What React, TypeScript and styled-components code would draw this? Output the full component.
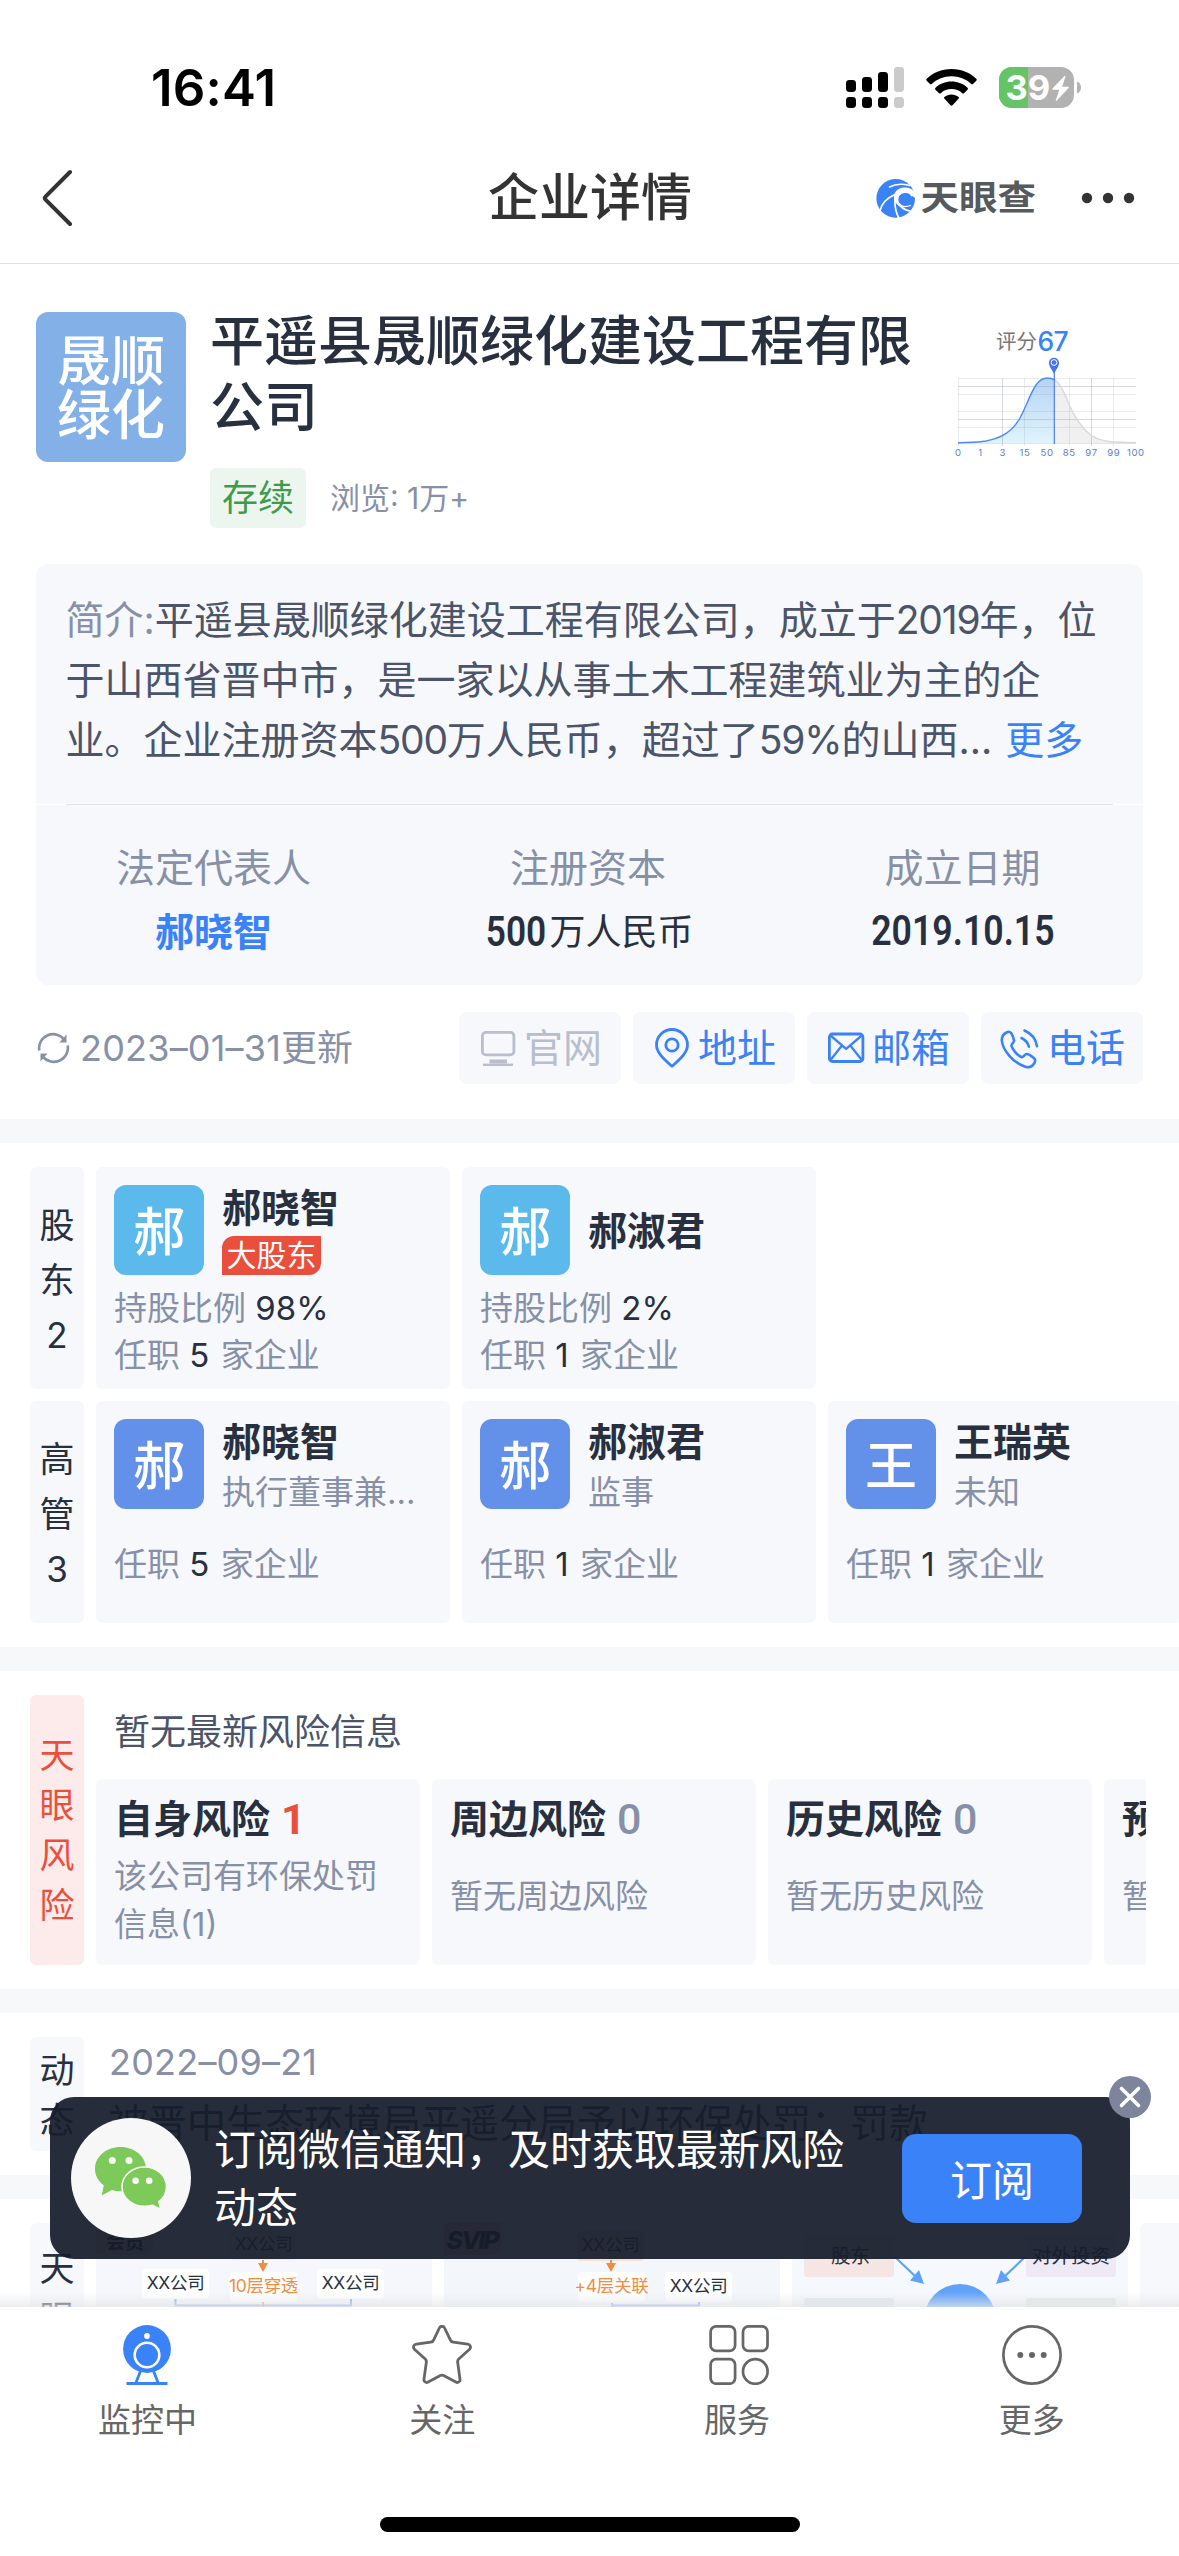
import React from 'react';
import styled, { createGlobalStyle, css } from 'styled-components';

const color = {
  ink: '#28303f',
  text: '#4b5468',
  muted: '#8790a6',
  blue: '#3a82f7',
  red: '#ea4f3d',
  panel: '#f6f8fc',
  band: '#f6f8fa',
  tab: '#666666',
};

const Global = createGlobalStyle`
  * { box-sizing: border-box; }
  html, body { margin: 0; padding: 0; background: #fff; }
  body {
    font-family: Inter, "Noto Sans CJK SC", sans-serif;
    color: ${color.ink};
    -webkit-font-smoothing: antialiased;
  }
  svg { display: block; flex: none; }
`;

const Screen = styled.div`
  position: relative;
  width: 1179px;
  height: 2556px;
  overflow: hidden;
  display: flex;
  flex-direction: column;
  background: #fff;
`;

const StatusBar = styled.div`
  height: 134px;
  flex: none;
  display: flex;
  align-items: flex-start;
  justify-content: space-between;
  padding: 67px 98px 0 151px;
`;
const Clock = styled.div`
  font-size: 51px;
  font-weight: 600;
  line-height: 42px;
  letter-spacing: 0.2px;
  color: #000;
`;
const StatusIcons = styled.div`
  display: flex;
  align-items: center;
  gap: 22px;
`;

const NavBar = styled.header`
  height: 130px;
  flex: none;
  display: grid;
  grid-template-columns: 1fr auto 1fr;
  align-items: center;
  border-bottom: 1px solid #e0e0e2;
  padding: 0 44px 1px 42px;
`;
const NavTitle = styled.h1`
  margin: 0;
  padding-left: 3px;
  font-size: 51px;
  line-height: 60px;
  font-weight: 500;
  color: #333;
`;
const NavRight = styled.div`
  display: flex;
  align-items: center;
  justify-content: flex-end;
`;
const Brand = styled.div`
  display: flex;
  align-items: center;
  gap: 4px;
  margin-right: 45px;
`;
const BrandText = styled.span`
  font-size: 38.5px;
  line-height: 40px;
  font-weight: 700;
  color: #56595d;
  transform: scaleY(0.88);
`;

const Body = styled.main`
  flex: 1;
  min-height: 0;
  overflow: hidden;
  position: relative;
`;
const Band = styled.div`
  height: 24px;
  background: ${color.band};
`;

const Summary = styled.section`
  padding: 48px 36px 35px;
`;
const CompanyHead = styled.div`
  display: flex;
  align-items: flex-start;
  height: 252px;
`;
const CompanyLogo = styled.div`
  width: 150px;
  height: 150px;
  border-radius: 12px;
  background: #84b0e8;
  color: #fff;
  font-size: 54px;
  line-height: 54px;
  font-weight: 500;
  display: flex;
  flex-direction: column;
  align-items: center;
  justify-content: center;
  padding-top: 4px;
`;
const CompanyInfo = styled.div`
  width: 716px;
  margin-left: 24px;
  margin-top: -3px;
`;
const CompanyName = styled.h2`
  margin: 0;
  font-size: 54px;
  line-height: 66px;
  font-weight: 500;
`;
const Meta = styled.div`
  display: flex;
  align-items: center;
  gap: 24px;
  margin-top: 27px;
`;
const StatusTag = styled.span`
  width: 96px;
  height: 60px;
  border-radius: 6px;
  background: #ecf6ef;
  color: #3f9b4c;
  font-size: 36px;
  line-height: 60px;
  text-align: center;
`;
const Views = styled.span`
  font-size: 30px;
  line-height: 60px;
  color: ${color.muted};
`;
const ScoreChart = styled.svg`
  margin-left: 24px;
  overflow: visible;
`;

const IntroCard = styled.div`
  display: flex;
  flex-direction: column;
`;
const Intro = styled.p`
  margin: 0;
  height: 240px;
  padding: 26px 30px 0 29.5px;
  border-radius: 12px 12px 0 0;
  background: ${color.panel};
  font-size: 39px;
  line-height: 60px;
  color: ${color.text};
`;
const IntroLine = styled.span`
  display: block;
  white-space: nowrap;
`;
const Digits = styled.span<{ $track?: number }>`
  letter-spacing: ${(p) => p.$track ?? -1.2}px;
`;
const Muted = styled.span`
  color: ${color.muted};
`;
const More = styled.span`
  color: ${color.blue};
  margin-left: 13px;
`;
const Rule = styled.div`
  height: 1px;
  margin: 0 30px;
  background: #e0e4ef;
`;
const Facts = styled.div`
  height: 180px;
  display: flex;
  justify-content: center;
  border-radius: 0 0 12px 12px;
  background: ${color.panel};
  padding: 33px 3px 0 0;
`;
const Fact = styled.div`
  width: 374.5px;
  flex: none;
  text-align: center;
`;
const FactLabel = styled.div`
  font-size: 39px;
  line-height: 60px;
  color: ${color.muted};
`;
const FactValue = styled.div<{ $link?: boolean }>`
  display: flex;
  justify-content: center;
  align-items: center;
  height: 60px;
  margin-top: 4px;
  font-size: ${(p) => (p.$link ? 39 : 36)}px;
  line-height: 60px;
  font-weight: ${(p) => (p.$link ? 600 : 400)};
  color: ${(p) => (p.$link ? color.blue : color.ink)};
`;
const Figure = styled.b<{ $w: number; $squeeze: number; $lift?: number }>`
  width: ${(p) => p.$w}px;
  padding-bottom: ${(p) => p.$lift ?? 0}px;
  display: flex;
  justify-content: center;
  font-family: Roboto, "Noto Sans CJK SC", sans-serif;
  font-weight: 600;
  font-size: 42px;
  > span {
    flex: none;
    transform: scaleX(${(p) => p.$squeeze});
  }
`;

const Actions = styled.div`
  display: flex;
  align-items: center;
  gap: 12px;
  margin-top: 27px;
`;
const Updated = styled.div`
  flex: 1;
  display: flex;
  align-items: center;
  gap: 10px;
  padding-left: 1px;
  font-size: 36px;
  line-height: 72px;
  color: ${color.muted};
  white-space: nowrap;
`;
const ActionButton = styled.button<{ $off?: boolean }>`
  width: 162px;
  height: 72px;
  border: 0;
  border-radius: 8px;
  background: ${color.panel};
  color: ${(p) => (p.$off ? '#b8becb' : color.blue)};
  display: flex;
  align-items: center;
  padding: 0 0 0 17px;
  gap: 6px;
  font: inherit;
  font-size: 39px;
  line-height: 72px;
  white-space: nowrap;
`;

const People = styled.section`
  padding: 24px 0 24px 30px;
  display: flex;
  flex-direction: column;
  gap: 12px;
`;
const Row = styled.div`
  display: flex;
  gap: 12px;
`;
const SideLabel = styled.div<{ $h: number; $pitch: number; $alert?: boolean; $top?: number }>`
  width: 54px;
  height: ${(p) => p.$h}px;
  flex: none;
  border-radius: 6px;
  background: ${(p) => (p.$alert ? '#fcebea' : color.panel)};
  color: ${(p) => (p.$alert ? color.red : color.ink)};
  display: flex;
  flex-direction: column;
  align-items: center;
  justify-content: ${(p) => (p.$top === undefined ? 'center' : 'flex-start')};
  padding-top: ${(p) => p.$top ?? (p.$alert ? 0 : 4)}px;
  font-size: 35px;
  line-height: ${(p) => p.$pitch}px;
`;
const PersonCard = styled.article`
  width: 354px;
  height: 222px;
  flex: none;
  border-radius: 6px;
  background: ${color.panel};
  padding: 18px;
`;
const PersonHead = styled.div`
  display: flex;
  gap: 18px;
  height: 90px;
`;
const Avatar = styled.div<{ $bg: string }>`
  width: 90px;
  height: 90px;
  flex: none;
  border-radius: 12px;
  background: ${(p) => p.$bg};
  color: #fff;
  font-size: 52px;
  line-height: 95px;
  font-weight: 500;
  text-align: center;
`;
const PersonMain = styled.div<{ $center?: boolean }>`
  min-width: 0;
  flex: 1;
  display: flex;
  flex-direction: column;
  align-items: flex-start;
  justify-content: ${(p) => (p.$center ? 'center' : 'space-between')};
  padding-top: ${(p) => (p.$center ? 2 : 0)}px;
`;
const PersonName = styled.div`
  font-size: 39px;
  line-height: 46px;
  font-weight: 600;
`;
const MajorTag = styled.span`
  width: 99px;
  height: 39px;
  border-radius: 12px 0 12px 0;
  background: ${color.red};
  color: #fff;
  font-size: 30px;
  line-height: 39px;
  text-align: center;
`;
const Post = styled.span`
  max-width: 198px;
  overflow: hidden;
  text-overflow: ellipsis;
  white-space: nowrap;
  font-size: 33px;
  line-height: 50px;
  height: 50px;
  margin-bottom: -8px;
  color: ${color.muted};
`;
const PersonLines = styled.div<{ $top: number }>`
  margin-top: ${(p) => p.$top}px;
  font-size: 33px;
  line-height: 47px;
  color: ${color.muted};
  b {
    font-weight: 400;
    color: ${color.ink};
  }
`;
const FirmCount = styled.b`
  margin-right: 2px;
`;

const RiskSection = styled.section`
  padding: 24px 33px 24px 30px;
  display: flex;
  gap: 12px;
`;
const RiskMain = styled.div`
  flex: 1;
  min-width: 0;
  overflow: hidden;
`;
const RiskNote = styled.div`
  height: 84px;
  padding-left: 18px;
  font-size: 36px;
  line-height: 75px;
  color: ${color.text};
`;
const RiskCard = styled.article`
  width: 324px;
  height: 186px;
  flex: none;
  border-radius: 6px;
  background: ${color.panel};
  padding: 15px 18px 0;
`;
const RiskTitle = styled.div<{ $hot?: boolean }>`
  height: 50px;
  display: flex;
  gap: 11px;
  font-size: 39px;
  line-height: 50px;
  font-weight: 600;
  white-space: nowrap;
  span {
    font-family: Roboto, sans-serif;
    font-weight: ${(p) => (p.$hot ? 700 : 500)};
    font-size: 43px;
    color: ${(p) => (p.$hot ? color.red : color.muted)};
  }
`;
const RiskText = styled.p<{ $two?: boolean }>`
  margin: ${(p) => (p.$two ? 8 : 28)}px 0 0;
  font-size: 33px;
  line-height: 48px;
  color: ${color.muted};
  ${(p) => !p.$two && css`white-space: nowrap;`}
`;

const NewsSection = styled.section`
  padding: 24px 0 24px 30px;
  display: flex;
  gap: 25px;
`;
const NewsMain = styled.div`
  height: 114px;
`;
const NewsDate = styled.div`
  font-size: 36px;
  line-height: 51px;
  color: ${color.muted};
`;
const NewsText = styled.div`
  font-size: 39px;
  line-height: 60px;
  margin-top: 5px;
`;

const GraphSection = styled.section`
  padding: 24px 0 0 30px;
  display: flex;
  gap: 12px;
`;
const GraphCard = styled.div<{ $bg: string }>`
  width: 336px;
  height: 222px;
  flex: none;
  border-radius: 6px;
  background: ${(p) => p.$bg};
  overflow: hidden;
`;
const Fade = styled.div`
  position: absolute;
  left: 0;
  right: 0;
  bottom: 0;
  height: 15px;
  background: linear-gradient(rgba(228, 230, 233, 0), rgba(228, 230, 233, 0.72));
`;

const Notice = styled.aside`
  position: absolute;
  left: 50px;
  top: 2097px;
  width: 1080px;
  height: 162px;
  border-radius: 24px;
  background: rgba(23, 29, 44, 0.935);
  display: flex;
  align-items: center;
  padding: 0 48px 0 21px;
`;
const WechatBadge = styled.div`
  width: 120px;
  height: 120px;
  flex: none;
  border-radius: 50%;
  background: #f7f7f7;
  display: flex;
  align-items: center;
  justify-content: center;
`;
const NoticeText = styled.div`
  flex: 1;
  padding: 2px 0 0 23px;
  font-size: 42px;
  line-height: 58px;
  color: #fff;
  white-space: nowrap;
`;
const Subscribe = styled.button`
  width: 180px;
  height: 89px;
  border: 0;
  border-radius: 14px;
  background: ${color.blue};
  color: #fff;
  font: inherit;
  font-size: 42px;
  line-height: 89px;
  padding: 2px 0 0;
`;
const Close = styled.button`
  position: absolute;
  right: -21px;
  top: -21px;
  width: 42px;
  height: 42px;
  border: 0;
  border-radius: 50%;
  background: #7d849c;
  display: flex;
  align-items: center;
  justify-content: center;
  padding: 0;
`;

const TabBar = styled.nav`
  height: 249px;
  flex: none;
  background: #fff;
  display: flex;
  flex-direction: column;
  align-items: center;
`;
const Tabs = styled.div`
  width: 100%;
  height: 210px;
  display: grid;
  grid-template-columns: repeat(4, 1fr);
  padding-top: 18px;
`;
const Tab = styled.div`
  display: flex;
  flex-direction: column;
  align-items: center;
  gap: 12px;
  font-size: 33px;
  line-height: 47px;
  color: ${color.tab};
`;
const HomeBar = styled.div`
  width: 420px;
  height: 15px;
  border-radius: 8px;
  background: #000;
`;

const Signal = () => (
  <svg width="58" height="41" viewBox="0 0 58 41">
    {[13, 10, 5, 0].map((top, i) => (
      <g key={i} fill={i === 3 ? '#cbcbcb' : '#000'}>
        <rect x={i * 16} y={top} width="10" height={25 - top} rx="3.4" />
        <rect x={i * 16} y="30" width="10" height="11" rx="3.4" />
      </g>
    ))}
  </svg>
);

const Wifi = () => (
  <svg width="51" height="37" viewBox="0 0 51 37">
    <path d="M25.5 0C35.4 0 44.400 3.800 50.300 9.800c.6.6.6 1.300 0 1.900l-3.300 3.300c-.5.5-1.200.5-1.700 0A28.500 28.500 0 0 0 25.500 7.200 28.500 28.500 0 0 0 5.700 15c-.5.5-1.200.5-1.700 0L.7 11.700c-.6-.6-.6-1.300 0-1.900C6.600 3.800 15.600 0 25.500 0z" />
    <path d="M25.500 12.600c6.200 0 11.800 2.300 16 6.200.6.5.6 1.300 0 1.900L38 24.200c-.5.5-1.200.5-1.700 0a16.300 16.300 0 0 0-21.600 0c-.5.5-1.200.5-1.700 0l-3.500-3.500c-.6-.6-.6-1.400 0-1.900 4.200-3.900 9.800-6.200 16-6.200z" />
    <path d="M25.500 25.400c2.700 0 5.100 1 7.100 2.500.5.400.5 1.100.1 1.600l-6.200 6.700c-.6.600-1.400.6-2 0l-6.200-6.700c-.4-.5-.4-1.200.1-1.600 2-1.500 4.400-2.500 7.100-2.500z" />
  </svg>
);

const Battery = () => (
  <svg width="82" height="41" viewBox="0 0 82 41">
    <defs>
      <clipPath id="cell">
        <rect width="75" height="41" rx="13" />
      </clipPath>
    </defs>
    <g clipPath="url(#cell)">
      <rect width="75" height="41" fill="#b2b2b2" />
      <rect width="29" height="41" fill="#65c466" />
    </g>
    <path d="M78 14.500c2.600 1 4 3.300 4 6s-1.400 5-4 6z" fill="#b2b2b2" />
    <text x="6.500" y="32.800" fontSize="34.500" fontWeight="700" fill="#fff">39</text>
    <path d="M65.500 9 53.500 21.600c-.4.500-.1 1.100.5 1.100h6.300l-3.600 10.700c-.1.600.5.800.9.400L69.600 21c.4-.500.1-1.200-.5-1.200h-6l3.400-10.200c.1-.6-.6-1-1-.6z" fill="#fff" />
  </svg>
);

const BackIcon = () => (
  <svg width="31" height="58" viewBox="0 0 31 58" fill="none" stroke="#333" strokeWidth="4" strokeLinecap="round" strokeLinejoin="round">
    <path d="M28 3 3.500 27.600a2.200 2.200 0 0 0 0 3L28 55" />
  </svg>
);

const EyeLogo = () => (
  <svg width="40" height="39" viewBox="0 0 40 39">
    <circle cx="19.700" cy="19.400" r="19.300" fill={color.blue} />
    <g fill="none" stroke="#fff" strokeLinecap="round">
      <path d="M33.500 6.500C25 4 18 5.500 13.500 8" strokeWidth="1.500" />
      <path d="M19 15.500C12 18.500 6 24 4 31.500" strokeWidth="1.700" />
      <path d="M19.300 17c-1 8 .5 16.500 3.500 22" strokeWidth="1.700" />
      <path d="M21 22.500c3 5.500 7.500 8.500 13 9.500" strokeWidth="1.700" />
      <path d="M20 23c3.500 4.500 9 5.500 14.500 3.500" strokeWidth="1.300" />
    </g>
    <path d="M39 13.500C36.500 9.500 31 7.700 26 8.800c-6.500 1.400-9.500 7.300-7.300 12.700 1.300 3.300 4.800 5.300 8.300 5-3.300-1.200-5-4-4.500-7 .5-3.500 3.800-5.700 7.500-5.400 2.700.2 4.500 1.500 5.300 3.300 1.300-.2 2.600.3 3.700 1.600z" fill="#fff" />
  </svg>
);

const Dots = () => (
  <svg width="54" height="12" viewBox="0 0 54 12" fill="#333">
    <circle cx="6" cy="6" r="5.200" />
    <circle cx="27" cy="6" r="5.200" />
    <circle cx="48" cy="6" r="5.200" />
  </svg>
);

const curveLeft =
  'M8 130.700C19 130.700 28 130.300 36 129 44 127.500 48 126 52.300 123.700 60 119.500 66 113 70 106 76 95 80 82 86 73 90 67.500 93 66 97 66 100 66 102.500 66.500 104.300 67.700';
const curveRight = 'M104.300 67.700C111 72 115 82 119.300 93 125 106 133 117 141.300 123.700 152 130 163 130.700 186 130.700';

const Score = () => (
  <ScoreChart width="190" height="150" viewBox="0 0 190 150">
    <defs>
      <linearGradient id="bell" x1="0" y1="0" x2="0" y2="1">
        <stop offset="0" stopColor="#b5d3f5" />
        <stop offset="1" stopColor="#dff4fb" />
      </linearGradient>
    </defs>
    <text x="46" y="37" fontSize="20.500" fill="#777">评分</text>
    <text x="87.500" y="39" fontSize="26.500" fontWeight="500" letterSpacing="-0.8" fill={color.blue}>67</text>
    <path d={`${curveRight}V131.500H104.300z`} fill="#f0f0f0" />
    <path d={`${curveLeft}V131.500H8z`} fill="url(#bell)" />
    <g stroke="#8d93a0" strokeWidth="1">
      {[66.500, 74.500, 82.500, 99.500, 107.500, 115.500, 131.500].map((y) => (
        <path key={y} d={`M8 ${y}H186`} strokeOpacity={y === 74.500 || y === 107.500 ? 0.34 : 0.18} />
      ))}
      {[8.500, 52.500, 74.500, 119.500, 141.500, 163.500].map((x) => (
        <path key={x} d={`M${x} 66V134`} strokeOpacity={x === 52.500 || x === 141.500 ? 0.34 : 0.18} />
      ))}
    </g>
    <path d={curveRight} fill="none" stroke="#d9d9d9" strokeWidth="1.400" />
    <path d={curveLeft} fill="none" stroke="#4b8bf5" strokeWidth="1.400" />
    <path d="M104.300 58V132" stroke="#4b7cf3" strokeWidth="1.200" />
    <path d="M104 62c-1.500-4-5-7-5-11.300a5 5 0 0 1 10 0c0 4.300-3.500 7.300-5 11.300z" fill="#4472f0" />
    <circle cx="104" cy="50.500" r="2.900" fill="#4472f0" stroke="#fff" strokeWidth="1" />
    <g fontSize="9.500" letterSpacing="0.600" fill="#5580cf" textAnchor="middle">
      {['0', '1', '3', '15', '50', '85', '97', '99', '100'].map((t, i) => (
        <text key={t} x={8.300 + i * 22.200} y="143.800">{t}</text>
      ))}
    </g>
  </ScoreChart>
);

const RefreshIcon = () => (
  <svg width="33" height="32" viewBox="0 0 33 32" fill="none" stroke={color.muted} strokeWidth="2.600">
    <path d="M2.300 18.500A14 14 0 0 1 27.500 8" />
    <path d="M30.700 13.500A14 14 0 0 1 5.500 24" />
    <path d="M29.500 2.500v8h-7z" fill={color.muted} stroke="none" />
    <path d="M3.500 29.500v-8h7z" fill={color.muted} stroke="none" />
  </svg>
);
const MonitorIcon = () => (
  <svg width="42" height="42" viewBox="0 0 42 42" fill="none" stroke="currentColor" strokeWidth="2.800">
    <rect x="6.400" y="5.400" width="31.500" height="22.500" rx="3.500" />
    <path d="M13.500 34.500h17.500" strokeWidth="4" />
    <path d="M7 37.800h30" strokeWidth="2.400" />
  </svg>
);
const PinIcon = () => (
  <svg width="42" height="42" viewBox="0 0 42 42" fill="none" stroke="currentColor" strokeWidth="2.800" strokeLinejoin="round">
    <path d="M22 39.300C13 31.500 6.500 25 6.500 18a15.500 15.500 0 0 1 31 0c0 7-6.500 13.500-15.500 21.300z" />
    <circle cx="22" cy="18" r="6.200" />
  </svg>
);
const MailIcon = () => (
  <svg width="42" height="42" viewBox="0 0 42 42" fill="none" stroke="currentColor" strokeWidth="2.800" strokeLinejoin="round">
    <rect x="5.400" y="7" width="33.500" height="27.500" rx="3" />
    <path d="m6.500 8.500 15.600 13.300L37.800 8.500M6.500 33 18 18.500M37.800 33 26.300 18.500" strokeWidth="2.300" />
  </svg>
);
const PhoneIcon = () => (
  <svg width="43" height="44" viewBox="0 0 43 44" fill="none" stroke="currentColor" strokeWidth="2.600" strokeLinecap="round" strokeLinejoin="round">
    <path d="M8.500 6.500c1.800-1 4-.8 5 1 1.200 2.500 2.200 4.800 2.600 7 .2 1.700-3 3.400-2.600 5.500.8 3.400 6.300 9.700 9.700 11 2.300.8 3.400-3.200 5.600-3 2 .2 5.500 2.700 7.500 4.500 1.300 1.300 1 3-.1 4.800-2 3.300-5.300 4.700-9 3.400C15.500 37 4.500 24 3.800 14.500c-.2-4 1.700-6.500 4.700-8z" />
    <path d="M23.500 12c3.800 1.800 6.300 4.600 7.400 8.700M26.500 4.500c6.800 2.900 11.300 8.300 12.500 15.700" />
  </svg>
);

const WechatIcon = () => (
  <svg width="74" height="64" viewBox="0 0 74 64">
    <path d="M26.500 1C11.900 1 1 10.800 1 22.800c0 6.800 3.300 12.600 8.800 16.500L7.800 49.500l10-5.600c2.800.8 5.600 1.300 8.700 1.300C40.600 45.200 52 35 52 22.800S40.600 1 26.500 1z" fill="#7dca5b" />
    <circle cx="18.300" cy="14.500" r="3.500" fill="#f7f7f7" />
    <circle cx="35" cy="14.500" r="3.500" fill="#f7f7f7" />
    <path d="M50.500 21C38 21 28 29.800 28 40.700S38 60.400 50.500 60.400c2.700 0 5.300-.4 7.700-1.200l8.500 4.300-1.800-7.800c4.700-3.700 7.600-9 7.600-15C72.500 29.800 63 21 50.500 21z" fill="#7dca5b" stroke="#f7f7f7" strokeWidth="1.600" />
    <circle cx="41.600" cy="34.800" r="3.300" fill="#f7f7f7" />
    <circle cx="55.200" cy="34.800" r="3.300" fill="#f7f7f7" />
  </svg>
);

const MonitorTab = () => (
  <svg width="60" height="60" viewBox="0 0 60 60">
    <circle cx="30" cy="24" r="23.900" fill={color.blue} />
    <circle cx="30" cy="11" r="2.900" fill="#fff" />
    <circle cx="30" cy="30" r="12.300" fill="none" stroke="#fff" strokeWidth="2.600" />
    <path d="M23.500 46 19 57.500M36.500 46 41 57.500" stroke={color.blue} strokeWidth="2.800" />
    <rect x="9.500" y="57" width="41" height="3" fill={color.blue} />
  </svg>
);
const StarTab = () => (
  <svg width="60" height="60" viewBox="0 1.200 62 62" fill="none" stroke={color.tab} strokeWidth="2.900" strokeLinejoin="round">
    <path d="M28.300 4.300c1-2.400 4.400-2.400 5.400 0l6 12.500c.5 1.200 1.600 2 2.900 2.200l15 2c2.800.4 3.700 3.300 1.900 5.200L48.300 36.300c-.9.900-1.300 2.300-1.100 3.500l2.400 17.300c.4 2.600-2 4.300-4.300 3.100L32.700 53.500a3.700 3.700 0 0 0-3.400 0L16.700 60.200c-2.300 1.200-4.700-.5-4.300-3.100l2.400-17.300c.2-1.200-.2-2.600-1.100-3.500L2.500 26.200C.7 24.300 1.600 21.400 4.400 21l15-2c1.300-.2 2.400-1 2.900-2.200z" />
  </svg>
);
const GridTab = () => (
  <svg width="64" height="60" viewBox="-4 0 64 60" fill="none" stroke={color.tab} strokeWidth="2.700">
    <rect x="1.600" y="1.400" width="24.500" height="24.500" rx="5.500" />
    <rect x="34" y="1.400" width="24.500" height="24.500" rx="5.500" />
    <rect x="1.600" y="34.200" width="24.500" height="24.500" rx="5.500" />
    <circle cx="46.300" cy="46.500" r="12.300" />
  </svg>
);
const MoreTab = () => (
  <svg width="60" height="60" viewBox="0 0 60 60" fill={color.tab}>
    <circle cx="30" cy="30" r="28.600" fill="none" stroke={color.tab} strokeWidth="2.700" />
    <circle cx="18.300" cy="30" r="3" />
    <circle cx="30" cy="30" r="3" />
    <circle cx="41.700" cy="30" r="3" />
  </svg>
);

type NodeProps = { x: number; y: number; label: string; fill?: string; ink?: string };
const Node = ({ x, y, label, fill = '#fff', ink = color.ink }: NodeProps) => (
  <g>
    <rect x={x} y={y} width="67" height="30" rx="4" fill={fill} />
    <text x={x + 33.500} y={y + 20} fontSize="17.500" letterSpacing="-0.3" textAnchor="middle" fill={ink}>{label}</text>
  </g>
);

const orange = '#ef8d42';

const EquityGraph = () => (
  <svg width="336" height="222" viewBox="0 0 336 222">
    <path d="M0 0h57v22a10 10 0 0 1-10 10H0z" fill="#f8e2c8" />
    <text x="29" y="25.500" fontSize="19" fontWeight="700" textAnchor="middle" fill="#2a1c18">会员</text>
    <Node x={134} y={7} label="XX公司" fill="#fbe8dc" />
    <path d="M167 37v8" stroke={orange} strokeWidth="2" />
    <path d="M162 40h10l-5 9z" fill={orange} />
    <Node x={46} y={46} label="XX公司" />
    <Node x={221} y={46} label="XX公司" />
    <path d="M79.500 76v6.500h175.500V76" fill="none" stroke="#7fb2f4" strokeWidth="2" />
    <Node x={134} y={49} label="10层穿透" ink={orange} />
    <path d="M167 79v12" stroke={orange} strokeWidth="1.600" />
  </svg>
);

const LinkGraph = () => (
  <svg width="336" height="222" viewBox="0 0 336 222">
    <path d="M0 0h57v22a10 10 0 0 1-10 10H0z" fill="#f3d0b0" />
    <text x="28" y="26" fontSize="25" fontWeight="800" fontStyle="italic" textAnchor="middle" letterSpacing="-2" fill="#23150f">SVIP</text>
    <Node x={133} y={8} label="XX公司" fill="#f8dfd0" />
    <path d="M167 37v8" stroke={orange} strokeWidth="2" />
    <path d="M162 40h10l-5 9z" fill={orange} />
    <Node x={134} y={49} label="+4层关联" ink={orange} />
    <Node x={221} y={49} label="XX公司" />
    <path d="M168 90V80M168 82.500h87V79" fill="none" stroke="#7fb2f4" strokeWidth="2" />
  </svg>
);

const RelationGraph = () => (
  <svg width="336" height="222" viewBox="0 0 336 222">
    <rect x="12" y="12" width="90" height="42" rx="3" fill="#f6e6e3" />
    <rect x="234" y="12" width="90" height="42" rx="3" fill="#efe8f5" />
    <text x="58.500" y="40" fontSize="19.500" textAnchor="middle" fill="#2c3140">股东</text>
    <text x="279" y="40" fontSize="19.500" textAnchor="middle" fill="#2c3140">对外投资</text>
    <path d="M103 34l21 20M233 34l-21 20" stroke="#5fa2f8" strokeWidth="2.200" />
    <path d="M132 61l-14-3.500 9-10.500zM204 61l14-3.500-9-10.500z" fill="#5fa2f8" />
    <circle cx="168" cy="97" r="36" fill="#5fa2f8" />
    <rect x="12" y="75" width="90" height="42" rx="3" fill="#dfe9ef" />
    <rect x="234" y="75" width="90" height="42" rx="3" fill="#e4ebe6" />
  </svg>
);

type Person = { name: string; mark: string; post?: string; major?: boolean; share?: string; firms: number };

const holders: Person[] = [
  { name: '郝晓智', mark: '郝', major: true, share: '98%', firms: 5 },
  { name: '郝淑君', mark: '郝', share: '2%', firms: 1 },
];
const officers: Person[] = [
  { name: '郝晓智', mark: '郝', post: '执行董事兼总经理', firms: 5 },
  { name: '郝淑君', mark: '郝', post: '监事', firms: 1 },
  { name: '王瑞英', mark: '王', post: '未知', firms: 1 },
];

const PersonItem = ({ p, bg }: { p: Person; bg: string }) => (
  <PersonCard>
    <PersonHead>
      <Avatar $bg={bg}>{p.mark}</Avatar>
      <PersonMain $center={!p.major && !p.post}>
        <PersonName>{p.name}</PersonName>
        {p.major && <MajorTag>大股东</MajorTag>}
        {p.post && <Post>{p.post}</Post>}
      </PersonMain>
    </PersonHead>
    <PersonLines $top={p.share ? 10 : 32}>
      {p.share && (
        <div>
          持股比例 <b>{p.share}</b>
        </div>
      )}
      <div>
        任职 <FirmCount>{p.firms}</FirmCount> 家企业
      </div>
    </PersonLines>
  </PersonCard>
);

const Vertical = ({ text, ...rest }: { text: string; $h: number; $pitch: number; $alert?: boolean; $top?: number }) => (
  <SideLabel {...rest}>
    {text.split('').map((ch, i) => (
      <span key={i}>{ch}</span>
    ))}
  </SideLabel>
);

const risks = [
  { title: '自身风险', count: 1, text: '该公司有环保处罚信息(1)' },
  { title: '周边风险', count: 0, text: '暂无周边风险' },
  { title: '历史风险', count: 0, text: '暂无历史风险' },
  { title: '预警提醒', count: 0, text: '暂无预警提醒' },
];

export default function App() {
  return (
    <Screen>
      <Global />
      <StatusBar>
        <Clock>16:41</Clock>
        <StatusIcons>
          <Signal />
          <Wifi />
          <Battery />
        </StatusIcons>
      </StatusBar>
      <NavBar>
        <BackIcon />
        <NavTitle>企业详情</NavTitle>
        <NavRight>
          <Brand>
            <EyeLogo />
            <BrandText>天眼查</BrandText>
          </Brand>
          <Dots />
        </NavRight>
      </NavBar>
      <Body>
        <Summary>
          <CompanyHead>
            <CompanyLogo>
              <span>晟顺</span>
              <span>绿化</span>
            </CompanyLogo>
            <CompanyInfo>
              <CompanyName>平遥县晟顺绿化建设工程有限公司</CompanyName>
              <Meta>
                <StatusTag>存续</StatusTag>
                <Views>浏览: 1万+</Views>
              </Meta>
            </CompanyInfo>
            <Score />
          </CompanyHead>
          <IntroCard>
            <Intro>
              <IntroLine>
                <Muted>简介:</Muted>平遥县晟顺绿化建设工程有限公司，成立于<Digits>2019</Digits>年，位
              </IntroLine>
              <IntroLine>于山西省晋中市，是一家以从事土木工程建筑业为主的企</IntroLine>
              <IntroLine>
                业。企业注册资本<Digits>500</Digits>万人民币，超过了<Digits>59%</Digits>的山西...<More>更多</More>
              </IntroLine>
            </Intro>
            <Rule />
            <Facts>
              <Fact>
                <FactLabel>法定代表人</FactLabel>
                <FactValue $link>郝晓智</FactValue>
              </Fact>
              <Fact>
                <FactLabel>注册资本</FactLabel>
                <FactValue>
                  <Figure $w={67} $squeeze={0.84}>
                    <span>500</span>
                  </Figure>
                  万人民币
                </FactValue>
              </Fact>
              <Fact>
                <FactLabel>成立日期</FactLabel>
                <FactValue>
                  <Figure $w={182} $squeeze={0.85} $lift={3}>
                    <span>2019.10.15</span>
                  </Figure>
                </FactValue>
              </Fact>
            </Facts>
          </IntroCard>
          <Actions>
            <Updated>
              <RefreshIcon />
              <span>
                <Digits $track={0.2}>2023–01–31</Digits>更新
              </span>
            </Updated>
            <ActionButton $off>
              <MonitorIcon />
              官网
            </ActionButton>
            <ActionButton>
              <PinIcon />
              地址
            </ActionButton>
            <ActionButton>
              <MailIcon />
              邮箱
            </ActionButton>
            <ActionButton>
              <PhoneIcon />
              电话
            </ActionButton>
          </Actions>
        </Summary>
        <Band />
        <People>
          <Row>
            <Vertical text="股东2" $h={222} $pitch={55} />
            {holders.map((p) => (
              <PersonItem key={p.name} p={p} bg="#5bb9ec" />
            ))}
          </Row>
          <Row>
            <Vertical text="高管3" $h={222} $pitch={55} />
            {officers.map((p) => (
              <PersonItem key={p.name} p={p} bg="#6390e8" />
            ))}
          </Row>
        </People>
        <Band />
        <RiskSection>
          <Vertical text="天眼风险" $h={270} $pitch={50} $alert />
          <RiskMain>
            <RiskNote>暂无最新风险信息</RiskNote>
            <Row>
              {risks.map((r) => (
                <RiskCard key={r.title}>
                  <RiskTitle $hot={r.count > 0}>
                    {r.title}
                    <span>{r.count}</span>
                  </RiskTitle>
                  <RiskText $two={r.count > 0}>{r.text}</RiskText>
                </RiskCard>
              ))}
            </Row>
          </RiskMain>
        </RiskSection>
        <Band />
        <NewsSection>
          <Vertical text="动态" $h={114} $pitch={50} $top={8} />
          <NewsMain>
            <NewsDate>
              <Digits $track={0.2}>2022–09–21</Digits>
            </NewsDate>
            <NewsText>被晋中生态环境局平遥分局予以环保处罚；罚款</NewsText>
          </NewsMain>
        </NewsSection>
        <Band />
        <GraphSection>
          <Vertical text="天眼图谱" $h={222} $pitch={50} $top={20} />
          <GraphCard $bg="#f6f7fc">
            <EquityGraph />
          </GraphCard>
          <GraphCard $bg="#f3f7fc">
            <LinkGraph />
          </GraphCard>
          <GraphCard $bg="#f5f8fc">
            <RelationGraph />
          </GraphCard>
          <GraphCard $bg="#f6f8fc" />
        </GraphSection>
        <Fade />
      </Body>
      <TabBar>
        <Tabs>
          <Tab>
            <MonitorTab />
            监控中
          </Tab>
          <Tab>
            <StarTab />
            关注
          </Tab>
          <Tab>
            <GridTab />
            服务
          </Tab>
          <Tab>
            <MoreTab />
            更多
          </Tab>
        </Tabs>
        <HomeBar />
      </TabBar>
      <Notice>
        <WechatBadge>
          <WechatIcon />
        </WechatBadge>
        <NoticeText>
          订阅微信通知，及时获取最新风险
          <br />
          动态
        </NoticeText>
        <Subscribe>订阅</Subscribe>
        <Close aria-label="关闭">
          <svg width="24" height="24" viewBox="0 0 24 24" stroke="#fff" strokeWidth="3.600" strokeLinecap="round">
            <path d="M3.500 3.500l17 17M20.500 3.500l-17 17" />
          </svg>
        </Close>
      </Notice>
    </Screen>
  );
}
